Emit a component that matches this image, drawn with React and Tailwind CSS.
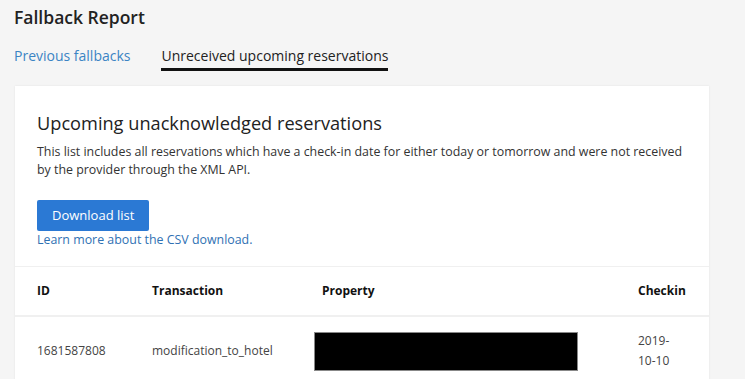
export default function App() {
  return (
    <div className="w-[745px] h-[379px] overflow-hidden bg-[#f5f5f5] font-['Open_Sans',sans-serif] text-[#333]">
      <div className="pl-[14px] pt-[4px]">
        <h1 className="text-[17.5px] font-semibold leading-[26px] text-[#222]">Fallback Report</h1>
        <div className="flex gap-[31px] mt-[16px] text-[14px] leading-[20px]">
          <a className="text-[#3b84c4] pb-[2px] border-b-[3px] border-transparent">Previous fallbacks</a>
          <a className="text-[#222] pb-[2px] border-b-[3px] border-[#111]">Unreceived upcoming reservations</a>
        </div>
      </div>

      <div className="ml-[15px] mt-[15px] w-[694px] bg-white shadow-[0_0_2px_rgba(0,0,0,0.08)]">
        <div className="px-[22px] pt-[24px] pb-[17px]">
          <h2 className="text-[18.2px] font-medium leading-[26px] text-[#222]">Upcoming unacknowledged reservations</h2>
          <p className="mt-[7px] text-[12.4px] leading-[18px] text-[#333]">
            This list includes all reservations which have a check-in date for either today or tomorrow and were not received
            by the provider through the XML API.
          </p>
          <button className="mt-[21px] h-[31px] px-[15px] rounded-[2px] bg-[#2b79d4] text-white text-[13px]">Download list</button>
          <a className="block text-[12.4px] leading-[18px] text-[#2f71b3]">Learn more about the CSV download.</a>
        </div>

        <div className="border-t border-[#f0f0f0]">
          <div className="grid grid-cols-[115px_170px_316px_1fr] px-[22px] h-[50px] items-center text-[12px] font-bold text-[#111] border-b-2 border-[#f0f0f0]">
            <div>ID</div>
            <div>Transaction</div>
            <div>Property</div>
            <div>Checkin</div>
          </div>
          <div className="grid grid-cols-[115px_170px_316px_1fr] px-[22px] pt-[14px] pb-[20px] items-center text-[12px] text-[#444]">
            <div>1681587808</div>
            <div>modification_to_hotel</div>
            <div>
              <div className="-ml-[8px] w-[264px] h-[39px] bg-black border border-[#888]"></div>
            </div>
            <div className="leading-[20px]">
              2019-
              <br />
              10-10
            </div>
          </div>
        </div>
      </div>
    </div>
  );
}
